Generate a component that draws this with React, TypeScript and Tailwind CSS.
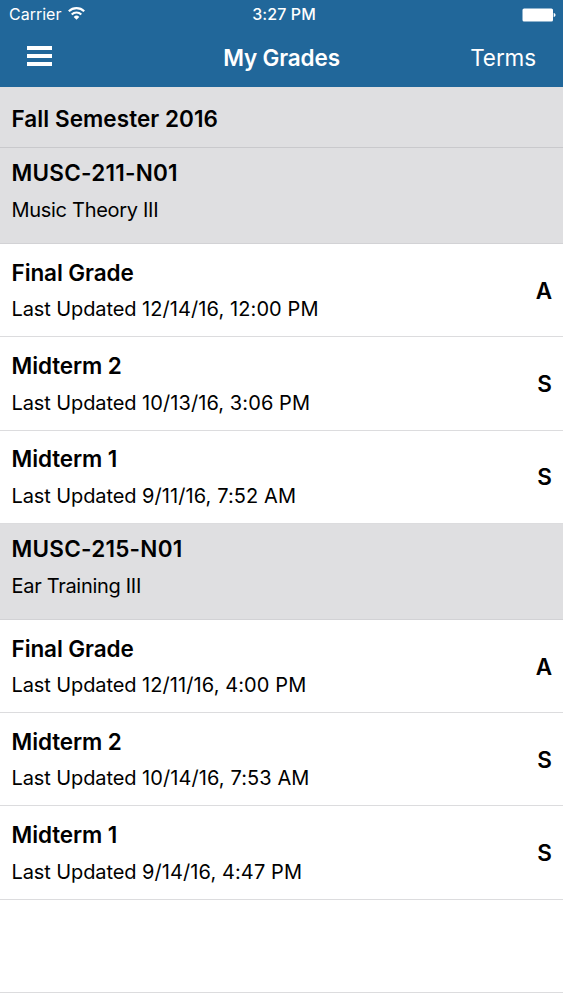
type Grade = { title: string; updated: string; grade: string };
type Course = { code: string; name: string; grades: Grade[] };

const courses: Course[] = [
  {
    code: 'MUSC-211-N01',
    name: 'Music Theory III',
    grades: [
      { title: 'Final Grade', updated: '12/14/16, 12:00 PM', grade: 'A' },
      { title: 'Midterm 2', updated: '10/13/16, 3:06 PM', grade: 'S' },
      { title: 'Midterm 1', updated: '9/11/16, 7:52 AM', grade: 'S' },
    ],
  },
  {
    code: 'MUSC-215-N01',
    name: 'Ear Training III',
    grades: [
      { title: 'Final Grade', updated: '12/11/16, 4:00 PM', grade: 'A' },
      { title: 'Midterm 2', updated: '10/14/16, 7:53 AM', grade: 'S' },
      { title: 'Midterm 1', updated: '9/14/16, 4:47 PM', grade: 'S' },
    ],
  },
];

function WifiIcon() {
  return (
    <svg width="17" height="13" viewBox="0 0 17 13" fill="none" stroke="#fff" strokeWidth="2.1">
      <path d="M0.8 4.3a11 11 0 0 1 15.4 0" />
      <path d="M3.7 7.5a6.8 6.8 0 0 1 9.6 0" />
      <path d="M8.5 12.8 5.7 9.9a4 4 0 0 1 5.6 0z" fill="#fff" stroke="none" />
    </svg>
  );
}

function BatteryIcon() {
  return (
    <svg width="34" height="14" viewBox="0 0 34 14" fill="#fff">
      <rect x="0.5" y="0.5" width="30.5" height="13" rx="1.6" />
      <path d="M31.7 4.9c1.2.2 1.8 1 1.8 2s-.6 1.8-1.8 2z" />
    </svg>
  );
}

function Header() {
  return (
    <header className="h-[87px] bg-[#21679a] text-white">
      <div className="grid h-[29px] grid-cols-3 items-center pl-[9px] pr-[7px]">
        <div className="flex items-center gap-[7px]">
          <span className="text-[16px] leading-[29px]">Carrier</span>
          <span className="pb-[2px]">
            <WifiIcon />
          </span>
        </div>
        <span className="pl-[3px] text-center text-[16px] font-medium leading-[29px] tracking-[0.1px]">3:27 PM</span>
        <div className="flex justify-end">
          <BatteryIcon />
        </div>
      </div>
      <div className="grid h-[58px] grid-cols-3 items-center pl-[27px] pr-[27px]">
        <button aria-label="Menu" className="mb-[4px] flex w-[25px] flex-col gap-[4px]">
          <span className="h-[4px] bg-white" />
          <span className="h-[4px] bg-white" />
          <span className="h-[4px] bg-white" />
        </button>
        <h1 className="whitespace-nowrap text-center text-[22.5px] font-semibold leading-[56px] tracking-[-0.15px]">
          My Grades
        </h1>
        <button className="text-right text-[22.5px] leading-[56px] tracking-[-0.1px]">Terms</button>
      </div>
    </header>
  );
}

function GradeRow({ title, updated, grade }: Grade) {
  return (
    <li className="flex h-[93.25px] items-center justify-between border-b border-[#dcdcde] pl-[11.5px] pr-[11px]">
      <div className="pt-[2px]">
        <div className="text-[22.5px] font-semibold leading-[37px] tracking-[-0.1px]">{title}</div>
        <div className="pt-[0.5px] text-[20px] leading-[37px] tracking-[0.1px]">
          <span className="tracking-[-0.1px]">Last Updated </span>
          {updated}
        </div>
      </div>
      <span className="pt-[1px] text-[22.5px] font-semibold">{grade}</span>
    </li>
  );
}

export default function App() {
  return (
    <div className="h-[1000px] w-[563px] overflow-hidden bg-white font-['Inter',sans-serif] text-black">
      <Header />
      <h2 className="flex h-[61px] items-center border-b border-[#c9c9cc] bg-[#dfdfe1] pl-[11.5px] pt-[3px] text-[22.5px] font-semibold tracking-[0.06px]">
        Fall Semester 2016
      </h2>
      {courses.map((c) => (
        <section key={c.code}>
          <div className="h-[96px] border-b border-[#d2d2d5] bg-[#dfdfe1] pl-[11.5px] pt-[6px]">
            <div className="text-[22.5px] font-semibold leading-[37px] tracking-[0.25px]">{c.code}</div>
            <div className="pt-[1px] text-[20px] leading-[37px] tracking-[-0.3px]">{c.name}</div>
          </div>
          <ul>
            {c.grades.map((g) => (
              <GradeRow key={g.title} {...g} />
            ))}
          </ul>
        </section>
      ))}
      <div className="h-[93.25px] border-b border-[#dcdcde]" />
    </div>
  );
}
